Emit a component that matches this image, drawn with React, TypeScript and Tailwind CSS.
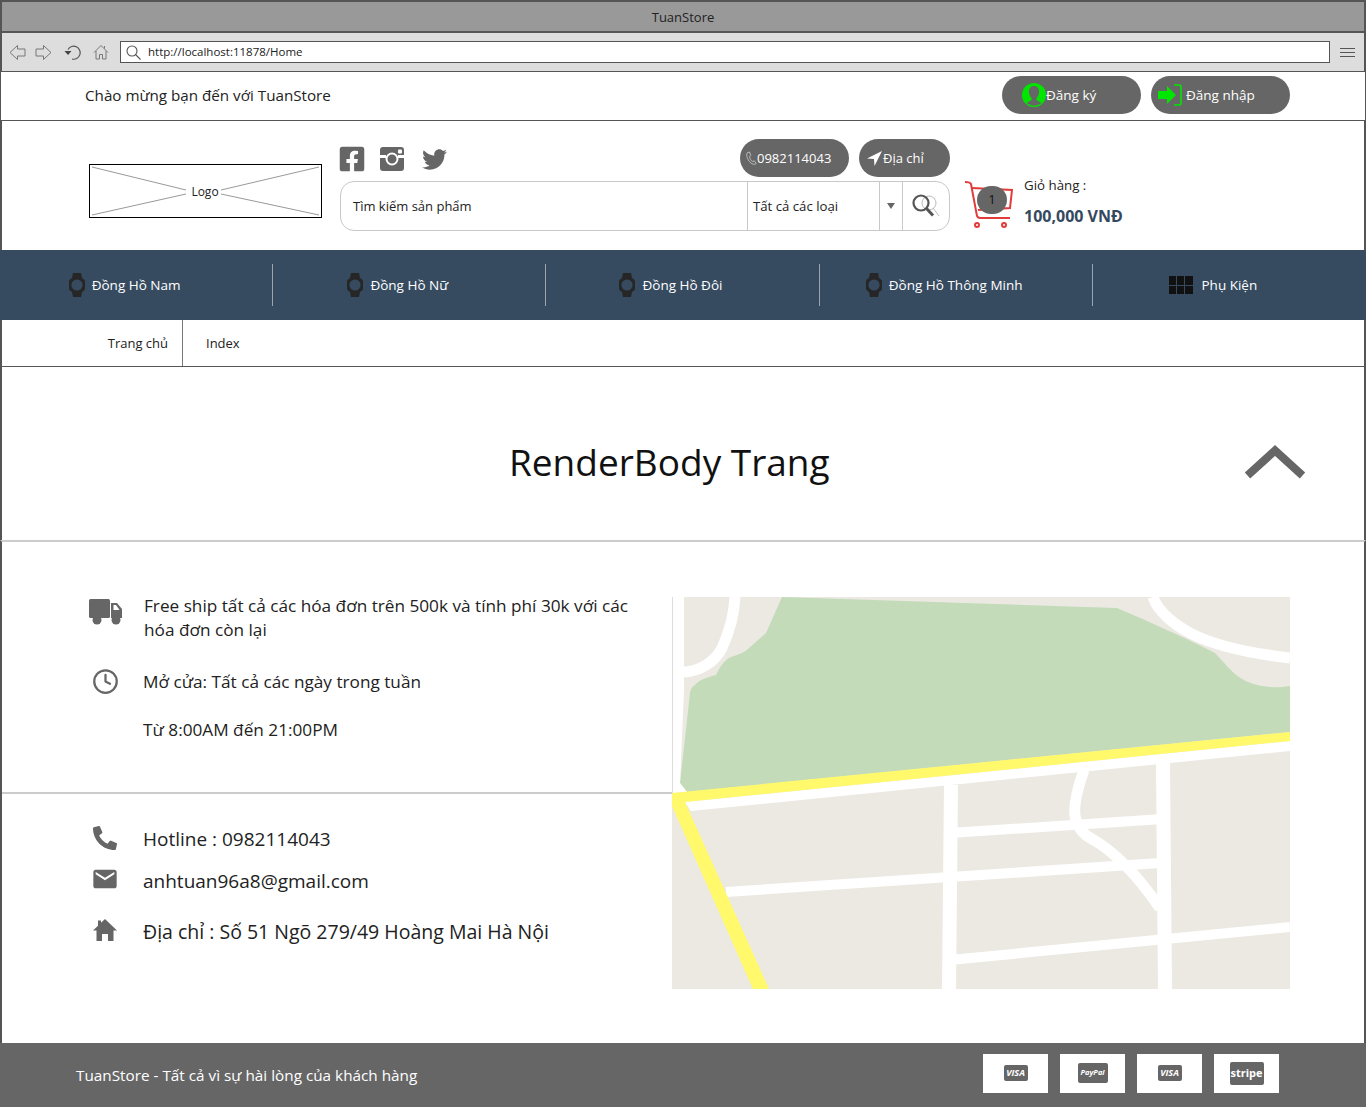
import { Clock } from "lucide-react";
import { FaFacebookSquare, FaPhoneAlt, FaTwitter } from "react-icons/fa";
import { MdEmail } from "react-icons/md";

const NAV = ["Đồng Hồ Nam", "Đồng Hồ Nữ", "Đồng Hồ Đôi", "Đồng Hồ Thông Minh"];

function WatchIcon() {
  return (
    <svg width="16" height="24" viewBox="0 0 16 24" fill="#262626">
      <path d="M4 0h8l1 5a8 8 0 0 1 0 14l-1 5H4l-1-5A8 8 0 0 1 3 5z" />
      <circle cx="8" cy="12" r="5.6" fill="#364b60" />
    </svg>
  );
}

function PayBadge({ label, box }: { label: string; box: string }) {
  return (
    <div className="flex h-[39px] w-[65px] items-center justify-center bg-white">
      <span className={`flex items-center justify-center rounded-[2px] bg-[#666666] font-bold text-white ${box}`}>
        {label}
      </span>
    </div>
  );
}

function ArrowButton({ flip }: { flip?: boolean }) {
  return (
    <svg width="17" height="17" viewBox="0 0 17 17" fill="none" stroke="#777" className={flip ? "rotate-180" : ""}>
      <path d="M1 8.5 8.5 1.5v3.5h7.5v7H8.500v3.500z" />
    </svg>
  );
}

function Toolbar() {
  return (
    <div className="flex h-[39px] items-center border-x-2 border-b border-[#555] bg-[#dddddd] pl-[7px] pr-[9px]">
      <ArrowButton />
      <span className="w-[9px]" />
      <ArrowButton flip />
      <svg width="18" height="17" viewBox="0 0 18 17" fill="none" stroke="#555" className="ml-[11px]">
        <path d="M5 5.500A6.500 6.500 0 1 1 9 15" strokeWidth="1.2" />
        <path d="M1.500 7h7l-3.500 4z" fill="#444" stroke="none" />
      </svg>
      <svg width="16" height="16" viewBox="0 0 16 16" fill="none" stroke="#777" className="ml-[12px]">
        <path d="M1 8.500 8 1.500l7 7M3 7v8h3.500v-4.500h3V15H13V7M11.500 2v2.500" />
      </svg>
      <div className="ml-[11px] flex h-[22px] flex-1 items-center border border-[#555] bg-white pl-[5px] text-[11.5px] text-[#222]">
        <svg width="15" height="15" viewBox="0 0 15 15" fill="none" stroke="#555" strokeWidth="1.1">
          <circle cx="6" cy="6" r="5" />
          <path d="m9.500 9.500 5 5" />
        </svg>
        <span className="ml-[7px]">http://localhost:11878/Home</span>
      </div>
      <div className="ml-[10px] flex w-[15px] flex-col gap-[3px]">
        <span className="h-px bg-[#555]" />
        <span className="h-px bg-[#555]" />
        <span className="h-px bg-[#555]" />
      </div>
    </div>
  );
}

function MapPicture() {
  return (
    <svg width="618" height="392" viewBox="672 597 618 392" className="block">
      <rect x="672" y="597" width="618" height="392" fill="#ebe9e2" />
      <path
        d="M782 597 1117 608C1150 622 1190 640 1215 653 1228 667 1235 676 1244 680 1255 686 1272 689 1290 686V732L687 792 680 783 690 693C691 688 693 686 695 685 699 680 705 678 716 675 720 667 724 660 731 657 740 654 745 652 748 649L766 633z"
        fill="#c3dbb9"
      />
      <path d="M672 597h12v93l-4 93 7 9-15 1z" fill="#fff" />
      <path d="M672.500 597v196" stroke="#ddd" strokeWidth="1" />
      <g fill="none" stroke="#fff" strokeWidth="11">
        <path d="M735 597C734 615 728 635 722 648 715 662 700 671 684 672" />
        <path d="M1153 597C1158 612 1175 625 1190 633 1215 646 1255 654 1290 658" />
        <path d="M951 785 949 989" strokeWidth="14" />
        <path d="M1163 763 1165 989" strokeWidth="14" />
        <path d="M950 833 1163 819" strokeWidth="10" />
        <path d="M726 892 1160 863" strokeWidth="10" />
        <path d="M950 960 1290 927" strokeWidth="10" />
        <path d="M1084 770C1078 787 1072 808 1076 820 1079 830 1084 835 1092 839 1112 850 1135 872 1160 908" />
      </g>
      <path d="M685 802 1290 741V751L691 811z" fill="#fff" />
      <path d="M672 793 1290 732V741L685 802 769 989H753L672 806z" fill="#fff96b" />
    </svg>
  );
}

export default function App() {
  return (
    <div className="h-[1107px] w-[1366px] overflow-hidden bg-white text-[#222] font-['Open_Sans',sans-serif]">
      <div className="flex h-[33px] items-center justify-center border-x-2 border-y-2 border-[#555] bg-[#999999] pt-[2px] text-[13px] text-[#222]">
        TuanStore
      </div>
      <Toolbar />

      <div className="flex h-[49px] items-center justify-between border-x border-b border-[#555] pl-[84px] pr-[75px]">
        <span className="mb-[2px] text-[15.2px]">Chào mừng bạn đến với TuanStore</span>
        <div className="mb-[2px] flex gap-[10px] text-[13.5px] text-white">
          <button className="flex h-[38px] w-[139px] items-center rounded-full bg-[#666666] pl-[20px]">
            <svg width="24" height="24" viewBox="0 0 24 24">
              <circle cx="12" cy="12" r="12" fill="#00e600" />
              <path d="M12 3c4 0 5.500 3.500 5 7-.4 2.600-1.500 4-2.500 5v2l5 3a12 12 0 0 1-15 0l5-3v-2C8.500 14 7.400 12.600 7 10c-.5-3.500 1-7 5-7z" fill="#666" />
            </svg>
            <span>Đăng ký</span>
          </button>
          <button className="flex h-[38px] w-[139px] items-center rounded-full bg-[#666666] pl-[6px]">
            <svg width="26" height="24" viewBox="0 0 26 24">
              <path d="M1 8h9V3l9 9-9 9v-5H1z" fill="#00e600" />
              <path d="M17 2h5a2 2 0 0 1 2 2v16a2 2 0 0 1-2 2h-5" fill="none" stroke="#00e600" strokeWidth="1.6" />
            </svg>
            <span className="ml-[3px]">Đăng nhập</span>
          </button>
        </div>
      </div>

      <div className="flex h-[129px] border-x-2 border-[#555] pl-[87px]">
        <div className="mt-[43px] flex h-[54px] w-[233px] items-center justify-center border border-black">
          <svg width="231" height="52" viewBox="0 0 231 52" className="block">
            <path d="M2 2 96 25M229 2 131 25M2 50 96 29M229 50 131 29" stroke="#999" fill="none" />
            <text x="115" y="31" fontSize="12" textAnchor="middle" fill="#222">Logo</text>
          </svg>
        </div>
        <div className="ml-[18px] w-[610px] pt-[18px]">
          <div className="flex h-[38px] items-start">
            <div className="mt-[6px] flex items-center text-[#666666]">
              <FaFacebookSquare className="-ml-[2px] h-[28px] w-[28px]" />
              <svg width="24" height="24" viewBox="0 0 24 24" className="ml-[14px]">
                <path d="M3 0h18a3 3 0 0 1 3 3v18a3 3 0 0 1-3 3H3a3 3 0 0 1-3-3V3a3 3 0 0 1 3-3z" fill="#666" />
                <rect x="0" y="8" width="6" height="3" fill="#fff" />
                <rect x="18" y="8" width="6" height="3" fill="#fff" />
                <circle cx="12" cy="12" r="5.500" fill="#666" stroke="#fff" strokeWidth="2" />
                <rect x="18" y="2.500" width="4" height="4" rx="1" fill="#fff" />
              </svg>
              <FaTwitter className="ml-[18px] h-[25px] w-[25px]" />
            </div>
            <div className="ml-auto flex gap-[10px] text-[13px] text-white">
              <span className="flex h-[38px] w-[109px] items-center rounded-full bg-[#666666] pl-[6px]">
                <svg width="11" height="18" viewBox="0 0 14 18" fill="none" stroke="#ddd" strokeWidth="0.9">
                  <path d="M2 2C0 4 1 9 4 13s7 5 9 3l-2.500-3.500-2 1C6.500 12.500 5 10 4.500 7.500L6 6 4.500 1.500z" />
                </svg>
                <span className="pt-[2px]">0982114043</span>
              </span>
              <span className="flex h-[38px] w-[91px] items-center rounded-full bg-[#666666] pl-[8px]">
                <svg width="15" height="15" viewBox="0 0 15 15" fill="#fff">
                  <path d="M15 0 0 7.500l7 .5.5 7z" />
                </svg>
                <span className="ml-[1px] pt-[2px]">Địa chỉ</span>
              </span>
            </div>
          </div>
          <div className="mt-[4px] flex h-[50px] items-stretch rounded-[14px] border border-[#c8c8c8] text-[13px]">
            <div className="flex w-[406px] items-center pl-[12px] pt-[2px]">Tìm kiếm sản phẩm</div>
            <div className="flex w-[132px] items-center border-l border-[#c8c8c8] pl-[5px] pt-[2px] text-[13.2px]">Tất cả các loại</div>
            <div className="flex w-[23px] items-center justify-center border-l border-[#c8c8c8]">
              <span className="h-0 w-0 border-x-[4px] border-t-[6px] border-x-transparent border-t-[#666]" />
            </div>
            <div className="flex flex-1 items-center justify-center border-l border-[#c8c8c8]">
              <svg width="28" height="24" viewBox="0 0 28 24" fill="none">
                <circle cx="17" cy="9" r="7" stroke="#bbb" />
                <path d="m21 14 6 8" stroke="#bbb" />
                <circle cx="9" cy="9" r="7.500" stroke="#555" strokeWidth="2.200" />
                <path d="m14.500 14.500 6.500 7" stroke="#555" strokeWidth="3" />
              </svg>
            </div>
          </div>
        </div>
        <div className="relative ml-[15px] mt-[59px] h-[48px] w-[48px]">
          <svg width="48" height="49" viewBox="0 0 48 49" fill="none" stroke="#e23b3b" strokeWidth="2">
            <path d="M0 2C3 2 5 2 6 4L12 36Q13 38 15 38H45" />
            <path d="M7 8 47 10 45 28 13 30" />
            <circle cx="12" cy="45" r="2" />
            <circle cx="39" cy="45" r="2" />
          </svg>
          <span className="absolute left-[12px] top-[6px] flex h-[28px] w-[30px] items-center justify-center rounded-full bg-[#666666] text-[13px] text-[#111]">
            1
          </span>
        </div>
        <div className="ml-[11px] pt-[55px]">
          <div className="text-[13.3px] leading-[18px]">Giỏ hàng :</div>
          <div className="mt-[12px] text-[16px] font-bold leading-[20px] text-[#34495e]">100,000 VNĐ</div>
        </div>
      </div>

      <div className="flex h-[70px] items-center bg-[#364b60] text-[13.5px] text-white">
        {NAV.map((label) => (
          <div key={label} className="grid h-[42px] w-[273.2px] grid-cols-[1fr_auto_1fr] items-center border-r border-[#9aa5b1]">
            <div className="flex justify-end pr-[7px]">
              <WatchIcon />
            </div>
            <span>{label}</span>
          </div>
        ))}
        <div className="grid h-[42px] flex-1 grid-cols-[1fr_auto_1fr] items-center">
          <div className="flex justify-end pr-[9px]">
            <div className="grid h-[18px] w-[24px] grid-cols-3 grid-rows-2 gap-[1px]">
              {[0, 1, 2, 3, 4, 5].map((i) => (
                <span key={i} className="bg-[#111]" />
              ))}
            </div>
          </div>
          <span>Phụ Kiện</span>
        </div>
      </div>

      <div className="flex h-[47px] items-stretch border-x-2 border-b border-[#555] text-[13px]">
        <div className="flex w-[181px] items-center justify-end border-r border-[#777] pr-[14px] pt-[2px]">Trang chủ</div>
        <div className="flex items-center pl-[23px] pt-[2px]">Index</div>
      </div>

      <div className="flex h-[173px] items-center border-x-2 border-[#555] pl-[507px] pr-[58px] pt-[16px]">
        <h1 className="text-[37px] text-[#111]">RenderBody Trang</h1>
        <svg width="62" height="38" viewBox="0 0 62 38" fill="none" stroke="#666" strokeWidth="8" className="ml-auto">
          <path d="M3.500 32.500 31 7.500 58.500 32.500" />
        </svg>
      </div>

      <div className="grid h-[503px] grid-cols-[670px_1fr] border-x-2 border-t-2 border-[#555] border-t-[#cccccc] text-[#222]">
        <div>
          <div className="h-[250px] pl-[87px] pt-[52px] text-[17.2px]">
            <div className="flex">
              <svg width="34" height="28" viewBox="0 0 34 28" fill="#666" className="mt-[5px] shrink-0">
                <rect x="0" y="0" width="21" height="19" rx="1.500" />
                <path d="M22 4h6l5 6v9H22zM24.500 6v5h6l-3.500-5z" fillRule="evenodd" />
                <circle cx="8" cy="21" r="4.500" />
                <circle cx="27" cy="21" r="4.500" />
              </svg>
              <p className="ml-[21px] w-[500px] leading-[24px]">
                Free ship tất cả các hóa đơn trên 500k và tính phí 30k với các hóa đơn còn lại
              </p>
            </div>
            <div className="mt-[26px] flex items-center">
              <Clock className="ml-[3px] h-[27px] w-[27px] text-[#666666]" strokeWidth={2} />
              <span className="ml-[24px]">Mở cửa: Tất cả các ngày trong tuần</span>
            </div>
            <p className="ml-[54px] mt-[22px]">Từ 8:00AM đến 21:00PM</p>
          </div>
          <div className="h-[251px] w-[672px] border-t-2 border-[#cccccc] pl-[91px] pt-[31px] text-[19px]">
            <div className="flex items-center">
              <FaPhoneAlt className="-mt-[3px] h-[24px] w-[24px] text-[#666666]" />
              <span className="ml-[26px]">Hotline : 0982114043</span>
            </div>
            <div className="mt-[13px] flex items-center">
              <MdEmail className="-ml-[2px] -mt-[3px] h-[28px] w-[28px] text-[#666666]" />
              <span className="ml-[24px]">anhtuan96a8@gmail.com</span>
            </div>
            <div className="mt-[22px] flex items-center">
              <svg width="24" height="24" viewBox="0 0 24 24" fill="#666666" className="-mt-[4px]">
                <path d="M12 1 24 12.500h-3.500V23H15v-7H9v7H3.500V12.500H0L5 7.700V2.500h3v2.300z" />
              </svg>
              <span className="ml-[26px] text-[19.5px]">Địa chỉ : Số 51 Ngõ 279/49 Hoàng Mai Hà Nội</span>
            </div>
          </div>
        </div>
        <div className="pt-[55px]">
          <MapPicture />
        </div>
      </div>

      <div className="flex h-[64px] items-center justify-between bg-[#666666] pl-[76px] pr-[87px] text-white">
        <span className="text-[15.3px]">TuanStore - Tất cả vì sự hài lòng của khách hàng</span>
        <div className="mb-[4px] flex gap-[12px]">
          <PayBadge label="VISA" box="h-[16px] w-[24px] text-[9px] italic" />
          <PayBadge label="PayPal" box="h-[20px] w-[30px] text-[7.5px] italic" />
          <PayBadge label="VISA" box="h-[16px] w-[24px] text-[9px] italic" />
          <PayBadge label="stripe" box="h-[23px] w-[34px] text-[11px]" />
        </div>
      </div>
    </div>
  );
}
